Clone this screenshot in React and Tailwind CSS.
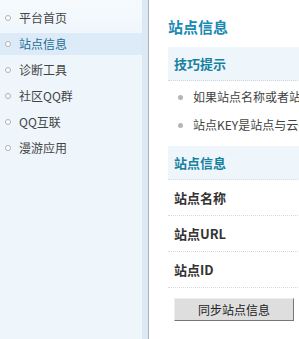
const menu = ["平台首页", "站点信息", "诊断工具", "社区QQ群", "QQ互联", "漫游应用"];
const tips = [
  "如果站点名称或者站点URL有变动，请点击同步站点信息",
  "站点KEY是站点与云平台通信的凭证，请勿泄露",
];
const rows = ["站点名称", "站点URL", "站点ID"];

export default function App() {
  return (
    <div className="flex h-[339px] w-[299px] overflow-hidden bg-white font-['Noto_Sans_CJK_SC',sans-serif] text-[12px] text-[#333]">
      <aside className="w-[142px] shrink-0 bg-gradient-to-b from-[#f6fafd] to-[#eef6fc] to-[40px] pt-[7px]">
        <ul>
          {menu.map((m, i) => (
            <li
              key={m}
              className={`mb-[4px] flex h-[22px] items-center ${
                i === 1 ? "bg-[#dcebf7] text-[#1f6d98]" : "text-[#444]"
              }`}
            >
              <span className="ml-[5px] mr-[8px] h-[6px] w-[6px] rounded-full border border-[#b0b0b0] bg-white" />
              {m}
            </li>
          ))}
        </ul>
      </aside>
      <div className="w-[6px] shrink-0 bg-[#dce9f5]" />
      <div className="w-px shrink-0 bg-[#a9b3bc]" />
      <main className="min-w-0 flex-1 overflow-hidden pl-[19px] pt-[17px]">
        <div className="w-[360px] whitespace-nowrap">
          <h2 className="h-[20px] text-[15px] font-bold leading-[20px] text-[#1a8ab3]">站点信息</h2>
          <div className="mt-[10px] flex h-[34px] items-center border-b border-dotted border-[#cfd8e0] bg-[#eef5fb] pl-[6px] text-[13px] font-bold text-[#17829f]">
            技巧提示
          </div>
          <ul className="pt-[2px]">
            {tips.map((t) => (
              <li key={t} className="flex h-[28px] items-center pl-[10px] text-[#444]">
                <span className="mr-[10px] h-[5px] w-[5px] rounded-full bg-[#b5b5b5]" />
                {t}
              </li>
            ))}
          </ul>
          <div className="mt-[7px] flex h-[34px] items-center border-b border-dotted border-[#d5dde4] bg-[#eef5fb] pl-[6px] text-[13px] font-bold text-[#17829f]">
            站点信息
          </div>
          {rows.map((r) => (
            <div
              key={r}
              className="flex h-[36px] items-center border-b border-dotted border-[#d8d8d8] pl-[6px] text-[13px] font-bold text-[#333]"
            >
              {r}
            </div>
          ))}
          <button className="ml-[6px] mt-[10px] h-[23px] w-[120px] border border-t-[#eee] border-l-[#eee] border-r-[#777] border-b-[#777] bg-[#dedede] text-[12px] text-[#222]">
            同步站点信息
          </button>
        </div>
      </main>
    </div>
  );
}
